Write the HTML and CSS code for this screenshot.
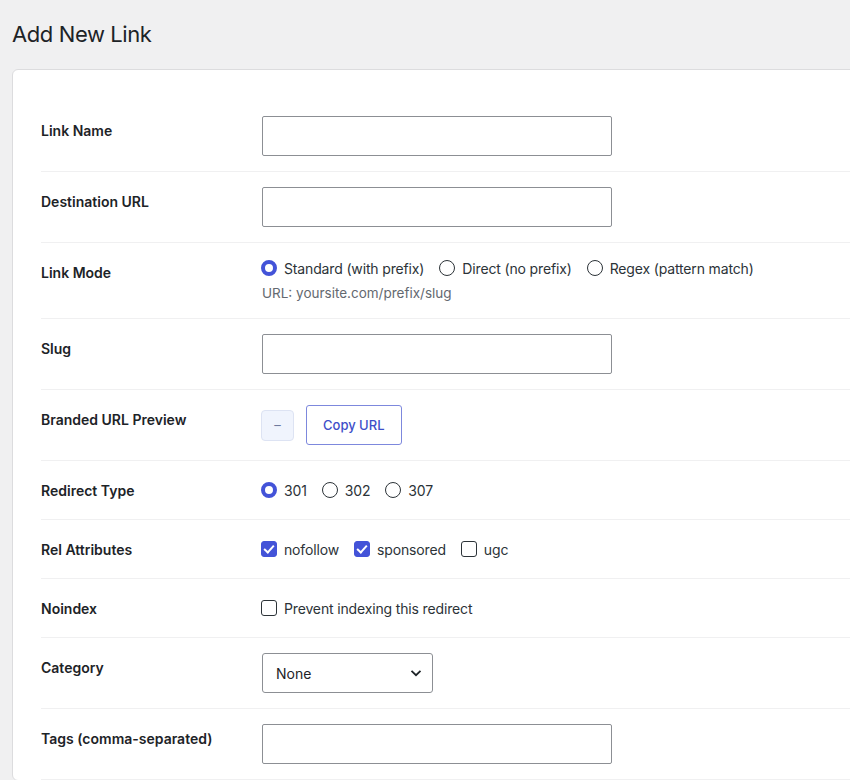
FILE: index.html
```html
<!DOCTYPE html>
<html lang="en">
<head>
  <meta charset="UTF-8" />
  <meta name="viewport" content="width=device-width, initial-scale=1.0"/>
  <title>Add New Link</title>
  <link rel="stylesheet" href="styles.css">
</head>
<body>
  <div class="wrap">
    <h1>Add New Link</h1>

    <form class="card">
      <!-- Basic fields -->
      <div class="row">
        <label class="row-label" for="link-name">Link Name</label>
        <div class="row-field"><input type="text" id="link-name" class="text-input" /></div>
      </div>

      <div class="row">
        <label class="row-label" for="dest-url">Destination URL</label>
        <div class="row-field"><input type="text" id="dest-url" class="text-input" /></div>
      </div>

      <div class="row">
        <div class="row-label">Link Mode</div>
        <div class="row-field">
          <div class="choices short">
            <label class="choice"><span class="radio checked"></span>Standard (with prefix)</label>
            <label class="choice"><span class="radio"></span>Direct (no prefix)</label>
            <label class="choice"><span class="radio"></span>Regex (pattern match)</label>
          </div>
          <p class="hint">URL: yoursite.com/prefix/slug</p>
        </div>
      </div>

      <div class="row">
        <label class="row-label" for="slug">Slug</label>
        <div class="row-field"><input type="text" id="slug" class="text-input" /></div>
      </div>

      <div class="row">
        <div class="row-label">Branded URL Preview</div>
        <div class="row-field">
          <div class="preview">
            <code class="preview-box">–</code>
            <button type="button" class="btn-outline">Copy URL</button>
          </div>
        </div>
      </div>

      <!-- Redirect options -->
      <div class="row">
        <div class="row-label">Redirect Type</div>
        <div class="row-field">
          <div class="choices">
            <label class="choice"><span class="radio checked"></span>301</label>
            <label class="choice"><span class="radio"></span>302</label>
            <label class="choice"><span class="radio"></span>307</label>
          </div>
        </div>
      </div>

      <div class="row">
        <div class="row-label">Rel Attributes</div>
        <div class="row-field">
          <div class="choices">
            <label class="choice"><span class="check checked"></span>nofollow</label>
            <label class="choice"><span class="check checked"></span>sponsored</label>
            <label class="choice"><span class="check"></span>ugc</label>
          </div>
        </div>
      </div>

      <div class="row">
        <div class="row-label">Noindex</div>
        <div class="row-field">
          <div class="choices">
            <label class="choice"><span class="check"></span>Prevent indexing this redirect</label>
          </div>
        </div>
      </div>

      <div class="row">
        <label class="row-label">Category</label>
        <div class="row-field">
          <div class="select">
            <span>None</span>
            <svg width="12" height="8" viewBox="0 0 12 8"><path d="M1.5 1.8 6 6.2l4.5-4.4" fill="none" stroke="#1d2327" stroke-width="1.8"/></svg>
          </div>
        </div>
      </div>

      <div class="row">
        <label class="row-label" for="tags">Tags (comma-separated)</label>
        <div class="row-field"><input type="text" id="tags" class="text-input" /></div>
      </div>
    </form>
  </div>
</body>
</html>
```

FILE: styles.css
```css
body {
  margin: 0;
  background: #f0f0f1;
  color: #1d2327;
  font-family: Inter, 'Noto Sans', sans-serif;
  overflow: hidden;
}

.wrap {
  padding: 0 0 0 12px;
  overflow: hidden;
}

h1 {
  margin: 19px 0 0;
  font-size: 22px;
  font-weight: 400;
  line-height: 30px;
  letter-spacing: -0.4px;
  color: #1d2327;
}

.card {
  margin: 20px -60px 0 0;
  background: #fff;
  border: 1px solid #dcdcde;
  border-radius: 6px;
  padding: 31px 28px 0;
}

.row {
  display: grid;
  grid-template-columns: 221px 1fr;
  border-bottom: 1px solid #f0f0f1;
}

.row-label {
  padding: 21px 0 15px;
  font-size: 14px;
  font-weight: 600;
  line-height: 18px;
}

.row-field {
  padding: 15px 0;
}

.text-input {
  display: block;
  box-sizing: border-box;
  width: 350px;
  height: 40px;
  margin: 0;
  border: 1px solid #8c8f94;
  border-radius: 2px;
  background: #fff;
}

.choices {
  display: flex;
  align-items: center;
  gap: 16px;
  height: 28px;
  font-size: 14px;
  letter-spacing: -0.15px;
}

.choices.short {
  height: 20px;
}

.choice {
  display: flex;
  align-items: center;
  gap: 7px;
  color: #2c3338;
}

.radio {
  box-sizing: border-box;
  width: 16px;
  height: 16px;
  border: 1px solid #2c3338;
  border-radius: 50%;
  margin-left: -1px;
}

.radio.checked {
  border: 4.5px solid #4353d8;
  background: #fff;
}

.check {
  box-sizing: border-box;
  width: 16px;
  height: 16px;
  border: 1px solid #2c3338;
  border-radius: 3px;
  margin-left: -1px;
  position: relative;
}

.check.checked {
  background: #4353d8;
  border-color: #4353d8;
}

.check.checked::after {
  content: "";
  position: absolute;
  left: 4px;
  top: 1px;
  width: 4px;
  height: 8px;
  border: solid #fff;
  border-width: 0 2px 2px 0;
  transform: rotate(42deg);
}

.hint {
  margin: 5px 0 0;
  font-size: 13.5px;
  line-height: 20px;
  color: #646970;
}

.preview {
  display: flex;
  align-items: center;
  gap: 12px;
  height: 40px;
}

.preview-box {
  box-sizing: border-box;
  width: 33px;
  height: 31px;
  margin-left: -1px;
  display: flex;
  align-items: center;
  justify-content: center;
  background: #f0f4fd;
  border: 1px solid #dde3f3;
  border-radius: 4px;
  color: #6f7a9e;
  font-family: Inter, sans-serif;
  font-size: 13px;
}

.btn-outline {
  box-sizing: border-box;
  height: 40px;
  padding: 0 16px;
  background: #fff;
  border: 1px solid #7d88dd;
  border-radius: 3px;
  color: #3e4fc9;
  font-family: Inter, sans-serif;
  font-size: 13px;
  font-weight: 500;
}

.select {
  box-sizing: border-box;
  width: 171px;
  height: 40px;
  display: flex;
  align-items: center;
  justify-content: space-between;
  padding: 0 10px 0 13px;
  border: 1px solid #8c8f94;
  border-radius: 3px;
  font-size: 14px;
  color: #1d2327;
}
```
